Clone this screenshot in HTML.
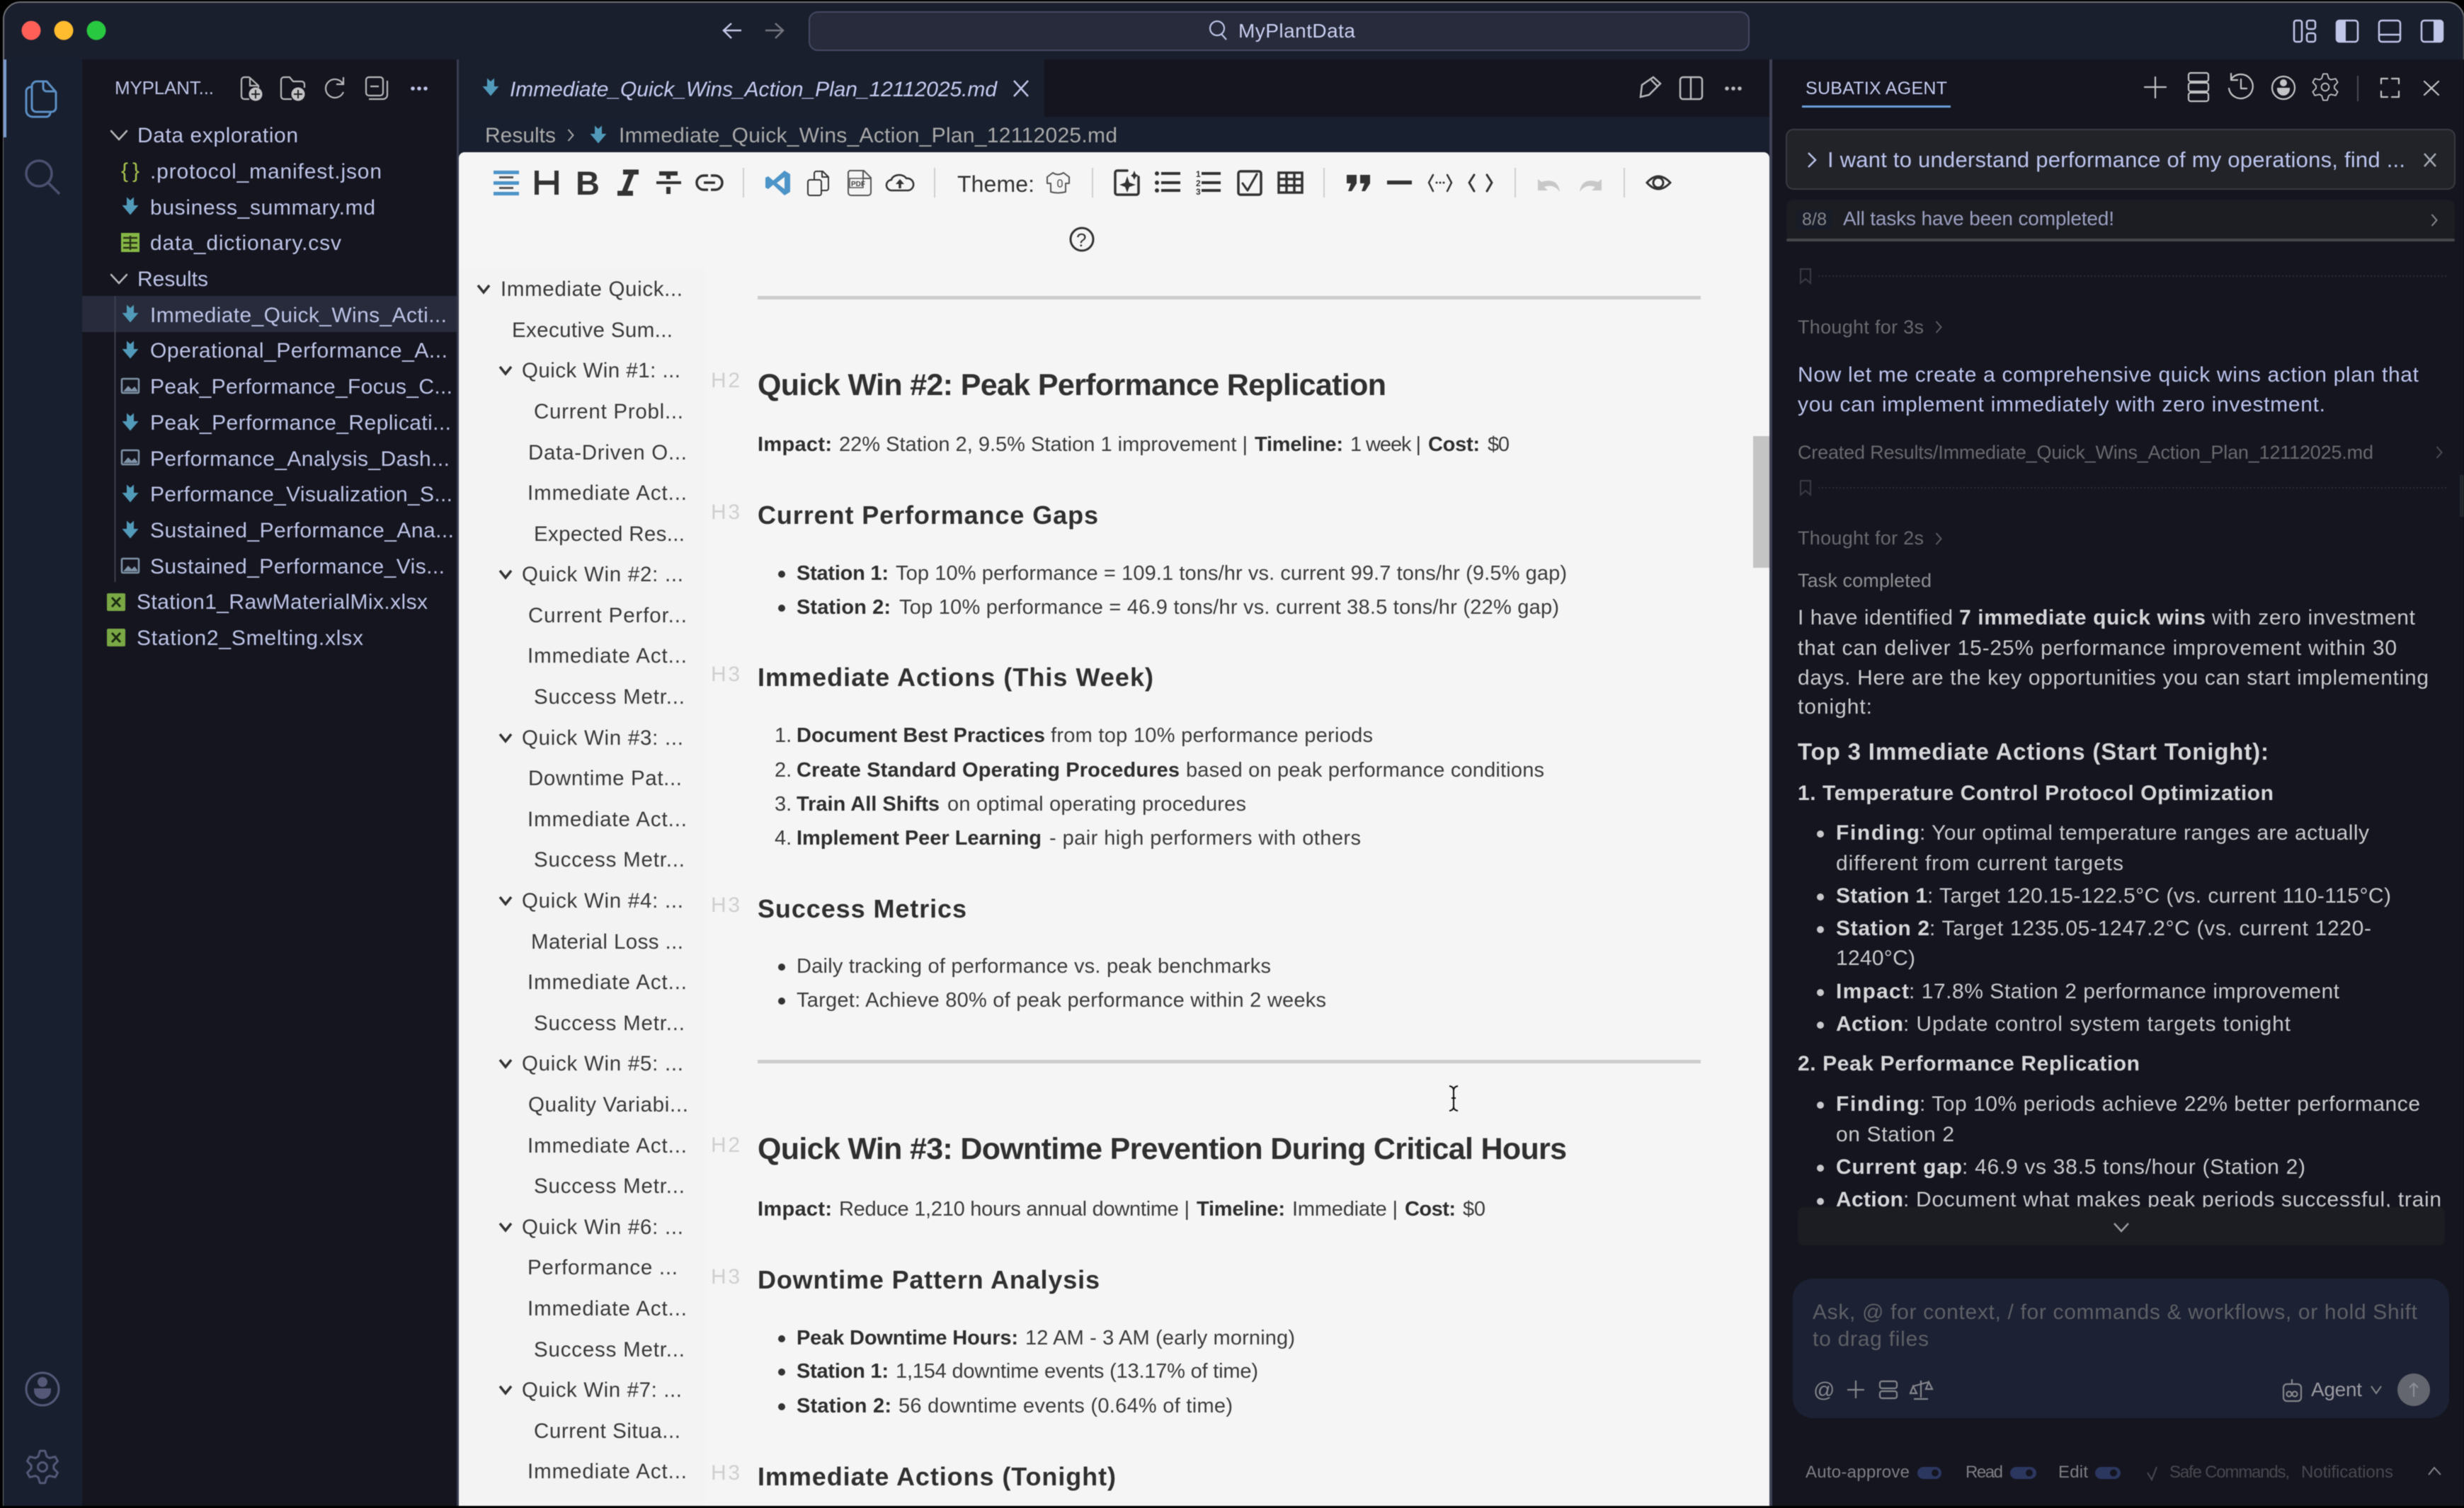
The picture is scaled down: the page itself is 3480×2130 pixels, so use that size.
<!DOCTYPE html>
<html><head><meta charset="utf-8"><title>MyPlantData</title>
<style>
html,body{margin:0;padding:0;background:#000;width:3480px;height:2130px;overflow:hidden}
svg{display:block;filter:blur(.6px)}
text{font-family:"Liberation Sans",sans-serif;white-space:pre}
.sb{font-size:30px;fill:#bcc3e6}
.ol{font-size:29.5px;fill:#3a3a3a}
.b{font-size:29px;fill:#3c3c3c}
.bb{font-size:29px;fill:#2e2e2e;font-weight:700}
.h2{font-size:43px;fill:#303030;font-weight:700}
.h3{font-size:36px;fill:#303030;font-weight:700}
.tag{font-size:30px;fill:#cfcfcf}
.r{font-size:30px;fill:#c9c9cc}
.rb{font-size:30px;fill:#d6d6d9;font-weight:700}
.rl{font-size:30px;fill:#bcc4ee}
.g{font-size:27px;fill:#69696e}
.ti{fill:none;stroke:#c0c6e8;stroke-width:2.5}
.tb{fill:none;stroke:#333;stroke-width:3;stroke-linecap:round;stroke-linejoin:round}
.ic{fill:none;stroke:#c4c4c6;stroke-width:2.2;stroke-linecap:round;stroke-linejoin:round}
.sep{stroke:#cfcfcf;stroke-width:2}
</style></head><body>
<svg xmlns="http://www.w3.org/2000/svg" width="3480" height="2130" viewBox="0 0 3480 2130">
<defs>
<path id="md" d="M-5,-12.5 L0,-8 L5,-12.5 V-1 H11.5 L0,12.5 L-11.5,-1 H-5 Z" fill="#519aba"/>
<g id="img"><rect x="-12" y="-10" width="24" height="20" rx="1.5" fill="none" stroke="#7f93a8" stroke-width="2.5"/><path d="M-10,8 L-3,0 L2,5 L6,1 L10,6 V8 Z" fill="#7f93a8"/></g>
<g id="xls"><rect x="-13" y="-12" width="26" height="25" rx="2" fill="#79a845"/><path d="M-6,-6 L6,7 M6,-6 L-6,7" stroke="#1b2a12" stroke-width="3" fill="none"/></g>
<path id="gear" d="M-3.6,-22.7 L3.6,-22.7 L6,-14.8 L9.9,-12.6 L17.9,-14.5 L21.5,-8.2 L15.8,-2.2 L15.8,2.2 L21.5,8.2 L17.9,14.5 L9.9,12.6 L6,14.8 L3.6,22.7 L-3.6,22.7 L-6,14.8 L-9.9,12.6 L-17.9,14.5 L-21.5,8.2 L-15.8,2.2 L-15.8,-2.2 L-21.5,-8.2 L-17.9,-14.5 L-9.9,-12.6 L-6,-14.8 Z M6.5,0 A6.5,6.5 0 1 1 -6.5,0 A6.5,6.5 0 1 1 6.5,0 Z" fill="none" stroke-linejoin="round"/>
<path id="chev" d="M-11,-6 L0,6 L11,-6" fill="none" stroke-linecap="round"/>
<path id="ochev" d="M-8,-5 L0,5 L8,-5" fill="none" stroke="#333" stroke-width="3.5"/>
<path id="rch" d="M-3.5,-8 L3.5,0 L-3.5,8" fill="none"/>
<path id="bm" d="M-7,-10 H7 V10 L0,4 L-7,10 Z" fill="none" stroke="#3a3b45" stroke-width="2"/>
<g id="srv"><rect x="-14" y="-20" width="28" height="12" rx="3"/><rect x="-14" y="-6" width="28" height="12" rx="3"/><rect x="-14" y="8" width="28" height="12" rx="3"/></g>
</defs>

<!-- window -->
<rect width="3480" height="2130" fill="#000"/>
<path d="M29,3 H3456 A24,24 0 0 1 3480,27 V2127 H5 V27 A24,24 0 0 1 29,3 Z" fill="#1a1f2e" stroke="#6f7076" stroke-width="2"/>
<!-- traffic -->
<circle cx="44" cy="43" r="13.5" fill="#ff5f57"/><circle cx="90" cy="43" r="13.5" fill="#febc2e"/><circle cx="136" cy="43" r="13.5" fill="#28c840"/>
<!-- nav -->
<g fill="none" stroke-width="2.5"><path d="M1047,43 H1022 M1033,33 L1022,43 L1033,54" stroke="#c4cae8"/><path d="M1081,43 H1106 M1095,33 L1106,43 L1095,54" stroke="#74767f"/></g>
<rect x="1143" y="17" width="1327" height="54" rx="12" fill="#282b3b" stroke="#454963" stroke-width="2"/>
<circle cx="1719" cy="40" r="10" fill="none" stroke="#bcc3e6" stroke-width="2.2"/><path d="M1725,48 L1732,56" stroke="#bcc3e6" stroke-width="2.2"/>
<text x="1749" y="53" font-size="28" fill="#c8cef0" textLength="165">MyPlantData</text>
<!-- layout icons -->
<g class="ti"><rect x="3240" y="29" width="11" height="30" rx="3"/><rect x="3258" y="29" width="12" height="12" rx="3"/><rect x="3258" y="47" width="12" height="12" rx="3"/><rect x="3300" y="29" width="30" height="30" rx="4"/><rect x="3360" y="29" width="30" height="30" rx="4"/><path d="M3360,49 H3390"/><rect x="3420" y="29" width="30" height="30" rx="4"/></g>
<path d="M3304,28 H3313 V60 H3304 a5,5 0 0 1 -5,-5 V33 a5,5 0 0 1 5,-5 Z" fill="#c0c6e8"/>
<path d="M3437,28 H3446 a5,5 0 0 1 5,5 V55 a5,5 0 0 1 -5,5 H3437 Z" fill="#c0c6e8"/>

<!-- activity bar -->
<rect x="5" y="84" width="111" height="2043" fill="#18202f"/>
<rect x="5" y="84" width="4" height="110" fill="#7b9bd0"/>
<g fill="none" stroke="#5b8ec4" stroke-width="3"><path d="M52,115 H66 L79,130 V152 a6,6 0 0 1 -6,6 H51 a6,6 0 0 1 -6,-6 V122 a7,7 0 0 1 7,-7 Z"/><path d="M61,115 V124 a5,5 0 0 0 5,5 H79"/><path d="M45,123 H43 a6,6 0 0 0 -6,6 V156 a9,9 0 0 0 9,9 H66 a6,6 0 0 0 5,-6"/></g>
<circle cx="55" cy="245" r="18" fill="none" stroke="#4c5070" stroke-width="3.5"/><path d="M68,258 L84,274" stroke="#4c5070" stroke-width="3.5"/>
<circle cx="60" cy="1962" r="23" fill="none" stroke="#555877" stroke-width="3"/><circle cx="60" cy="1952" r="7" fill="#555877"/><path d="M48,1961 H72 V1964 A12,12 0 0 1 48,1964 Z" fill="#555877"/>
<use href="#gear" x="60" y="2072" stroke="#555877" stroke-width="3"/>

<!-- sidebar -->
<rect x="116" y="84" width="529" height="2043" fill="#15151f"/>
<rect x="645" y="84" width="3" height="2043" fill="#3a3d50"/>
<rect x="116" y="418" width="529" height="51" fill="#272b3b"/>
<path d="M162.500,418 V822" stroke="#3c3f4c" stroke-width="2"/>
<text x="162" y="133" font-size="26" fill="#bcc3e6" textLength="140">MYPLANT...</text>
<g fill="none" stroke="#b8b8bc" stroke-width="2.2"><path d="M352,109 H345 a4,4 0 0 0 -4,4 V136 a4,4 0 0 0 4,4 H352 M352,109 L365,121 V124 M353,109 V121 H365"/><path d="M397,113 a4,4 0 0 1 4,-4 H409 L414,115 H426 a4,4 0 0 1 4,4 V124 M397,113 V136 a4,4 0 0 0 4,4 H412"/><path d="M484,118 A13,13 0 1 0 485,130 M485,109 V119 H475"/><rect x="517" y="109" width="24" height="26" rx="4"/><path d="M523,122 H535 M547,114 V134 a6,6 0 0 1 -6,6 H521"/></g>
<circle cx="361" cy="133" r="9.500" fill="#c4c4c6"/><path d="M355,133 H367 M361,127 V139" stroke="#222" stroke-width="2"/>
<circle cx="421" cy="133" r="9.500" fill="#c4c4c6"/><path d="M415,133 H427 M421,127 V139" stroke="#222" stroke-width="2"/>
<g fill="#bcc3e6"><circle cx="583" cy="125" r="2.800"/><circle cx="592" cy="125" r="2.800"/><circle cx="601" cy="125" r="2.800"/></g>
<use href="#chev" x="168" y="191" stroke="#b8b8bc" stroke-width="2.500"/><use href="#chev" x="168" y="394" stroke="#b8b8bc" stroke-width="2.500"/>
<text x="194" y="201" class="sb" textLength="227">Data exploration</text>
<text x="171" y="251" font-size="30" fill="#a6c34d" textLength="26">{ }</text>
<text x="212" y="252" class="sb" textLength="327">.protocol_manifest.json</text>
<use href="#md" x="184" y="291"/>
<text x="212" y="303" class="sb" textLength="318">business_summary.md</text>
<rect x="171" y="329" width="26" height="27" fill="#86b845"/><path d="M174,336 H194 M174,343 H194 M174,350 H194 M184,333 V353" stroke="#2a3318" stroke-width="2.500"/>
<text x="212" y="353" class="sb" textLength="270">data_dictionary.csv</text>
<text x="194" y="404" class="sb" textLength="100">Results</text>
<use href="#md" x="184" y="443"/><text x="212" y="455" class="sb" textLength="419">Immediate_Quick_Wins_Acti...</text>
<use href="#md" x="184" y="494"/><text x="212" y="505" class="sb" textLength="420">Operational_Performance_A...</text>
<use href="#img" x="184" y="545"/><text x="212" y="556" class="sb" textLength="427">Peak_Performance_Focus_C...</text>
<use href="#md" x="184" y="596"/><text x="212" y="607" class="sb" textLength="425">Peak_Performance_Replicati...</text>
<use href="#img" x="184" y="646"/><text x="212" y="658" class="sb" textLength="423">Performance_Analysis_Dash...</text>
<use href="#md" x="184" y="697"/><text x="212" y="708" class="sb" textLength="427">Performance_Visualization_S...</text>
<use href="#md" x="184" y="748"/><text x="212" y="759" class="sb" textLength="429">Sustained_Performance_Ana...</text>
<use href="#img" x="184" y="799"/><text x="212" y="810" class="sb" textLength="416">Sustained_Performance_Vis...</text>
<use href="#xls" x="164" y="850"/><text x="193" y="860" class="sb" textLength="411">Station1_RawMaterialMix.xlsx</text>
<use href="#xls" x="164" y="900"/><text x="193" y="911" class="sb" textLength="320">Station2_Smelting.xlsx</text>

<!-- editor chrome -->
<rect x="648" y="84" width="1855" height="81" fill="#15151f"/>
<rect x="648" y="84" width="827" height="81" fill="#1a1f2e"/>
<rect x="648" y="165" width="1855" height="50" fill="#181f2e"/>
<use href="#md" x="693" y="123"/>
<text x="720" y="136" font-size="30" font-style="italic" fill="#c4cbf0" textLength="688">Immediate_Quick_Wins_Action_Plan_12112025.md</text>
<path d="M1432,114 L1452,136 M1452,114 L1432,136" stroke="#c0c6e8" stroke-width="2.500"/>
<g fill="none" stroke="#b8b8bc" stroke-width="2.500"><path d="M2317,137 L2319,120 L2335,109 L2345,118 L2329,134 Z M2332,113 L2341,122"/><rect x="2373" y="109" width="31" height="31" rx="4"/><path d="M2388,109 V140"/></g>
<g fill="#b8b8bc"><circle cx="2439" cy="125" r="2.800"/><circle cx="2448" cy="125" r="2.800"/><circle cx="2457" cy="125" r="2.800"/></g>
<text x="685" y="201" font-size="30" fill="#a9a9a9" textLength="100">Results</text>
<use href="#rch" x="806" y="191" stroke="#a9a9a9" stroke-width="2"/>
<use href="#md" x="845" y="190"/>
<text x="874" y="201" font-size="30" fill="#a9a9a9" textLength="704">Immediate_Quick_Wins_Action_Plan_12112025.md</text>

<!-- white panel -->
<path d="M656,215 H2491 a8,8 0 0 1 8,8 V2127 H648 V223 a8,8 0 0 1 8,-8 Z" fill="#f5f5f5"/>
<rect x="2499" y="84" width="4" height="2043" fill="#3f4155"/>
<rect x="648" y="380" width="347" height="1747" fill="#f3f3f3"/>

<!-- toolbar -->
<g fill="#4d94c8"><rect x="697" y="241" width="36" height="5"/><rect x="697" y="256" width="36" height="5"/><rect x="697" y="271" width="36" height="5"/></g>
<g fill="#555"><rect x="705" y="249" width="20" height="3"/><rect x="705" y="264" width="20" height="3"/></g>
<path d="M758,241 V275 M786,241 V275 M758,258 H786" stroke="#333" stroke-width="6" fill="none"/>
<text x="813" y="275" font-size="47" font-weight="700" fill="#333">B</text>
<path d="M880,243 H902 M872,273 H894 M893,243 L881,273" stroke="#333" stroke-width="7" fill="none"/>
<path d="M927,258 H962" stroke="#333" stroke-width="4"/><path d="M931,245 H957 M944,245 V253 M944,264 V274" stroke="#333" stroke-width="6" fill="none"/>
<path d="M1000,248 H994 a10,10 0 0 0 0,20 H1000 M1004,248 H1010 a10,10 0 0 1 0,20 H1004 M994,258 H1010" stroke="#333" stroke-width="3.500" fill="none"/>
<g class="sep"><path d="M1050,237 V279 M1320,237 V279 M1543,237 V279 M1870,237 V279 M2140,237 V279 M2294,237 V279"/></g>
<path d="M1108,241 L1116,246 V271 L1108,276 L1092,261 L1085,267 L1081,265 V251 L1085,249 L1092,255 Z" fill="#4d94c8"/><path d="M1108,250 V267 L1097,258.500 Z" fill="#f5f5f5"/>
<g class="tb" style="stroke-width:2"><path d="M1150,254 V245 a3,3 0 0 1 3,-3 H1162 L1170,250 V266 a3,3 0 0 1 -3,3 H1160 M1161,242 V250 H1170"/><rect x="1141" y="254" width="19" height="22" rx="3"/></g>
<g fill="none" stroke="#555" stroke-width="2"><path d="M1200,241 H1220 L1230,251 V272 a4,4 0 0 1 -4,4 H1202 a4,4 0 0 1 -4,-4 V243 Z M1219,241 V252 H1230"/></g><rect x="1200" y="252" width="19" height="13" fill="#f5f5f5" stroke="#555" stroke-width="1.500"/><text x="1202" y="263" font-size="10" font-weight="700" fill="#444">PDF</text>
<path d="M1261,269 H1260 a7.500,7.500 0 0 1 -1,-15 a11,8 0 0 1 21,-2 a8.500,8.500 0 0 1 3,17 Z" class="tb" style="stroke-width:2.500"/><path d="M1271,266 V259" stroke="#333" stroke-width="3.500"/><path d="M1265,260 L1271,253 L1277,260 Z" fill="#333"/>
<text x="1352" y="271" font-size="32" fill="#333" textLength="109">Theme:</text>
<path d="M1487,244 Q1494,249 1502,244 L1510,250 L1510,259 L1505,259 V271 Q1494,274 1484,271 V259 L1479,259 L1479,250 Z" fill="none" stroke="#555" stroke-width="2" stroke-linejoin="round"/><rect x="1494" y="254" width="6" height="10" rx="3" fill="none" stroke="#555" stroke-width="1.500"/>
<g class="tb" style="stroke-width:3.500"><path d="M1592,241 H1578 a3,3 0 0 0 -3,3 V272 a3,3 0 0 0 3,3 H1605 a3,3 0 0 0 3,-3 V250"/></g>
<path d="M1592,249 L1595,258 L1604,261 L1595,264 L1592,272 L1589,264 L1581,261 L1589,258 Z M1602,241 L1604,246 L1608,248 L1604,250 L1602,254 L1600,250 L1597,248 L1600,246 Z" fill="#333"/>
<g fill="#333"><circle cx="1634" cy="245" r="3"/><circle cx="1634" cy="258" r="3"/><circle cx="1634" cy="269" r="3"/><rect x="1640" y="243" width="27" height="4"/><rect x="1640" y="256" width="27" height="4"/><rect x="1640" y="267" width="27" height="4"/><rect x="1697" y="243" width="27" height="4"/><rect x="1697" y="256" width="27" height="4"/><rect x="1697" y="267" width="27" height="4"/></g>
<g font-size="12" font-weight="700" fill="#333"><text x="1689" y="250">1</text><text x="1689" y="263">2</text><text x="1689" y="275">3</text></g>
<rect x="1749" y="242" width="32" height="33" rx="3" class="tb" style="stroke-width:3.500"/><path d="M1755,259 L1762,269 L1775,246" class="tb"/>
<rect x="1806" y="244" width="33" height="28" fill="none" stroke="#333" stroke-width="3.500"/><path d="M1817,244 V272 M1828,244 V272 M1806,253 H1839 M1806,262 H1839" stroke="#333" stroke-width="3.500"/>
<path d="M1902,247 H1916 V259 L1909,270 H1904 L1908,259 H1902 Z M1921,247 H1935 V259 L1928,270 H1923 L1927,259 H1921 Z" fill="#333"/>
<rect x="1959" y="255" width="35" height="5.500" fill="#333"/>
<path d="M2024,247 L2018,258 L2024,270 M2044,247 L2050,258 L2044,270" class="tb" style="stroke-width:2.500"/><g fill="#333"><circle cx="2029" cy="258" r="1.500"/><circle cx="2034" cy="258" r="1.500"/><circle cx="2039" cy="258" r="1.500"/></g>
<path d="M2082,247 L2075,258 L2082,270 M2100,247 L2107,258 L2100,270" class="tb"/>
<path d="M2172,253 V269 H2186 L2181,264 Q2194,259 2203,271 Q2200,250 2177,257 Z" fill="#c8c8c8"/>
<path d="M2262,253 V269 H2248 L2253,264 Q2240,259 2231,271 Q2234,250 2257,257 Z" fill="#c8c8c8"/>
<path d="M2326,258 Q2342,240 2359,258 Q2342,276 2326,258 Z" fill="none" stroke="#333" stroke-width="3"/><circle cx="2342" cy="258" r="7" fill="none" stroke="#333" stroke-width="3"/>
<circle cx="1528" cy="338" r="16" fill="none" stroke="#333" stroke-width="3"/><text x="1520" y="348" font-size="26" fill="#333">?</text>

<!-- outline -->
<use href="#ochev" x="683" y="408"/>
<text x="707" y="418" class="ol" textLength="257">Immediate Quick...</text>
<text x="723" y="476" class="ol" textLength="227">Executive Sum...</text>
<use href="#ochev" x="714" y="523"/><text x="737" y="533" class="ol" textLength="224">Quick Win #1: ...</text>
<text x="754" y="591" class="ol" textLength="211">Current Probl...</text>
<text x="746" y="649" class="ol" textLength="224">Data-Driven O...</text>
<text x="745" y="706" class="ol" textLength="225">Immediate Act...</text>
<text x="754" y="764" class="ol" textLength="213">Expected Res...</text>
<use href="#ochev" x="714" y="811"/><text x="737" y="821" class="ol" textLength="228">Quick Win #2: ...</text>
<text x="746" y="879" class="ol" textLength="224">Current Perfor...</text>
<text x="745" y="936" class="ol" textLength="225">Immediate Act...</text>
<text x="754" y="994" class="ol" textLength="213">Success Metr...</text>
<use href="#ochev" x="714" y="1042"/><text x="737" y="1052" class="ol" textLength="228">Quick Win #3: ...</text>
<text x="746" y="1109" class="ol" textLength="217">Downtime Pat...</text>
<text x="745" y="1167" class="ol" textLength="225">Immediate Act...</text>
<text x="754" y="1224" class="ol" textLength="213">Success Metr...</text>
<use href="#ochev" x="714" y="1272"/><text x="737" y="1282" class="ol" textLength="228">Quick Win #4: ...</text>
<text x="750" y="1340" class="ol" textLength="215">Material Loss ...</text>
<text x="745" y="1397" class="ol" textLength="225">Immediate Act...</text>
<text x="754" y="1455" class="ol" textLength="213">Success Metr...</text>
<use href="#ochev" x="714" y="1502"/><text x="737" y="1512" class="ol" textLength="228">Quick Win #5: ...</text>
<text x="746" y="1570" class="ol" textLength="226">Quality Variabi...</text>
<text x="745" y="1628" class="ol" textLength="225">Immediate Act...</text>
<text x="754" y="1685" class="ol" textLength="213">Success Metr...</text>
<use href="#ochev" x="714" y="1733"/><text x="737" y="1743" class="ol" textLength="228">Quick Win #6: ...</text>
<text x="745" y="1800" class="ol" textLength="212">Performance ...</text>
<text x="745" y="1858" class="ol" textLength="225">Immediate Act...</text>
<text x="754" y="1916" class="ol" textLength="213">Success Metr...</text>
<use href="#ochev" x="714" y="1963"/><text x="737" y="1973" class="ol" textLength="226">Quick Win #7: ...</text>
<text x="754" y="2031" class="ol" textLength="207">Current Situa...</text>
<text x="745" y="2088" class="ol" textLength="225">Immediate Act...</text>

<!-- doc -->
<rect x="1070" y="418" width="1332" height="5" fill="#cdcdcd"/>
<rect x="1070" y="1497" width="1332" height="5" fill="#cdcdcd"/>
<text x="1004" y="547" class="tag" textLength="41">H2</text>
<text x="1070" y="558" class="h2" textLength="888">Quick Win #2: Peak Performance Replication</text>
<text x="1070" y="637" class="bb" textLength="105">Impact:</text><text x="1185" y="637" class="b" textLength="577">22% Station 2, 9.5% Station 1 improvement |</text><text x="1772" y="637" class="bb" textLength="125">Timeline:</text><text x="1907" y="637" class="b" textLength="100">1 week |</text><text x="2017" y="637" class="bb" textLength="73">Cost:</text><text x="2101" y="637" class="b" textLength="31">$0</text>
<text x="1004" y="733" class="tag" textLength="41">H3</text>
<text x="1070" y="740" class="h3" textLength="481">Current Performance Gaps</text>
<circle cx="1104" cy="811" r="5" fill="#333"/><text x="1125" y="819" class="bb" textLength="130">Station 1:</text><text x="1265" y="819" class="b" textLength="948">Top 10% performance = 109.1 tons/hr vs. current 99.7 tons/hr (9.5% gap)</text>
<circle cx="1104" cy="859" r="5" fill="#333"/><text x="1125" y="867" class="bb" textLength="133">Station 2:</text><text x="1270" y="867" class="b" textLength="932">Top 10% performance = 46.9 tons/hr vs. current 38.5 tons/hr (22% gap)</text>
<text x="1004" y="962" class="tag" textLength="41">H3</text>
<text x="1070" y="969" class="h3" textLength="559">Immediate Actions (This Week)</text>
<text x="1094" y="1048" class="b">1.</text><text x="1125" y="1048" class="bb" textLength="351">Document Best Practices</text><text x="1484" y="1048" class="b" textLength="455">from top 10% performance periods</text>
<text x="1094" y="1097" class="b">2.</text><text x="1125" y="1097" class="bb" textLength="541">Create Standard Operating Procedures</text><text x="1675" y="1097" class="b" textLength="506">based on peak performance conditions</text>
<text x="1094" y="1145" class="b">3.</text><text x="1125" y="1145" class="bb" textLength="202">Train All Shifts</text><text x="1338" y="1145" class="b" textLength="422">on optimal operating procedures</text>
<text x="1094" y="1193" class="b">4.</text><text x="1125" y="1193" class="bb" textLength="346">Implement Peer Learning</text><text x="1482" y="1193" class="b" textLength="440">- pair high performers with others</text>
<text x="1004" y="1288" class="tag" textLength="41">H3</text>
<text x="1070" y="1296" class="h3" textLength="295">Success Metrics</text>
<circle cx="1104" cy="1366" r="5" fill="#333"/><text x="1125" y="1374" class="b" textLength="670">Daily tracking of performance vs. peak benchmarks</text>
<circle cx="1104" cy="1414" r="5" fill="#333"/><text x="1125" y="1422" class="b" textLength="748">Target: Achieve 80% of peak performance within 2 weeks</text>
<text x="1004" y="1627" class="tag" textLength="41">H2</text>
<text x="1070" y="1637" class="h2" textLength="1143">Quick Win #3: Downtime Prevention During Critical Hours</text>
<text x="1070" y="1717" class="bb" textLength="105">Impact:</text><text x="1185" y="1717" class="b" textLength="495">Reduce 1,210 hours annual downtime |</text><text x="1690" y="1717" class="bb" textLength="125">Timeline:</text><text x="1825" y="1717" class="b" textLength="149">Immediate |</text><text x="1984" y="1717" class="bb" textLength="72">Cost:</text><text x="2066" y="1717" class="b" textLength="32">$0</text>
<text x="1004" y="1813" class="tag" textLength="41">H3</text>
<text x="1070" y="1820" class="h3" textLength="483">Downtime Pattern Analysis</text>
<circle cx="1104" cy="1891" r="5" fill="#333"/><text x="1125" y="1899" class="bb" textLength="313">Peak Downtime Hours:</text><text x="1448" y="1899" class="b" textLength="381">12 AM - 3 AM (early morning)</text>
<circle cx="1104" cy="1938" r="5" fill="#333"/><text x="1125" y="1946" class="bb" textLength="130">Station 1:</text><text x="1265" y="1946" class="b" textLength="512">1,154 downtime events (13.17% of time)</text>
<circle cx="1104" cy="1987" r="5" fill="#333"/><text x="1125" y="1995" class="bb" textLength="134">Station 2:</text><text x="1269" y="1995" class="b" textLength="472">56 downtime events (0.64% of time)</text>
<text x="1004" y="2090" class="tag" textLength="41">H3</text>
<text x="1070" y="2098" class="h3" textLength="506">Immediate Actions (Tonight)</text>
<!-- scrollbar & cursor -->
<rect x="2476" y="616" width="23" height="186" fill="#c4c4c4"/>
<path d="M2047,1534 Q2053,1535 2053,1540 V1563 Q2053,1568 2047,1569 M2059,1534 Q2053,1535 2053,1540 M2059,1569 Q2053,1568 2053,1563 M2050,1551 H2056" fill="none" stroke="#111" stroke-width="2"/>

<!-- right panel -->
<rect x="2503" y="84" width="977" height="2043" fill="#14151f"/>
<text x="2550" y="133" font-size="25" fill="#c4cbf0" textLength="200">SUBATIX AGENT</text>
<rect x="2545" y="149" width="210" height="3" fill="#6aa0dc"/>
<g class="ic"><path d="M3044,109 V138 M3029,123 H3059"/><use href="#srv" x="3105" y="123"/><path d="M3151,112 A17,17 0 1 1 3148,125 M3151,104 V113 H3160 M3165,112 V125 H3173"/><circle cx="3225" cy="124" r="16"/><use href="#gear" x="3284" y="123" transform="translate(3284,123) scale(.82) translate(-3284,-123)"/><path d="M3363,118 V111 H3372 M3378,111 H3388 V118 M3388,129 V137 H3378 M3372,137 H3363 V129"/><path d="M3424,115 L3444,134 M3444,115 L3424,134"/></g>
<circle cx="3225" cy="117" r="5" fill="#c4c4c6"/><path d="M3216,124 H3234 V126 A9,9 0 0 1 3216,126 Z" fill="#c4c4c6"/>
<path d="M3330,107 V143" stroke="#4a4b52" stroke-width="2"/>
<rect x="2523" y="183" width="944" height="84" rx="10" fill="#212329" stroke="#3a3b42" stroke-width="2"/>
<path d="M2554,216 L2564,226 L2554,236" fill="none" stroke="#bcc2e8" stroke-width="2.500"/>
<text x="2581" y="236" font-size="31" fill="#bcc4ee" textLength="816">I want to understand performance of my operations, find ...</text>
<path d="M3424,217 L3440,235 M3440,217 L3424,235" stroke="#a6a8b4" stroke-width="2.500"/>
<rect x="2523" y="282" width="944" height="59" rx="10" fill="#1c1d22"/><rect x="2523" y="337" width="944" height="4" rx="2" fill="#48484c"/>
<rect x="2537" y="297" width="50" height="28" rx="6" fill="#171c28"/>
<text x="2545" y="318" font-size="25" fill="#86868a" textLength="35">8/8</text>
<text x="2603" y="318" font-size="28" fill="#9a9fc0" textLength="383">All tasks have been completed!</text>
<use href="#rch" x="3438" y="311" stroke="#88888c" stroke-width="2"/>
<use href="#bm" x="2550" y="390"/><path d="M2568,390 H3455" stroke="#2c2d37" stroke-width="2" stroke-dasharray="2 3"/>
<text x="2539" y="471" class="g" textLength="178">Thought for 3s</text><use href="#rch" x="2738" y="462" stroke="#5c5c62" stroke-width="2"/>
<text x="2539" y="539" class="rl" textLength="877">Now let me create a comprehensive quick wins action plan that</text>
<text x="2539" y="581" class="rl" textLength="745">you can implement immediately with zero investment.</text>
<text x="2539" y="648" class="g" textLength="813">Created Results/Immediate_Quick_Wins_Action_Plan_12112025.md</text><use href="#rch" x="3445" y="639" stroke="#4c4c52" stroke-width="2"/>
<use href="#bm" x="2550" y="689"/><path d="M2568,689 H3455" stroke="#2c2d37" stroke-width="2" stroke-dasharray="2 3"/>
<rect x="3474" y="671" width="6" height="59" fill="#24262e"/>
<text x="2539" y="769" class="g" textLength="178">Thought for 2s</text><use href="#rch" x="2738" y="761" stroke="#5c5c62" stroke-width="2"/>
<text x="2539" y="829" font-size="27" fill="#8f8f92" textLength="189">Task completed</text>
<text x="2539" y="882" class="r" textLength="219">I have identified</text><text x="2767" y="882" class="rb" textLength="348">7 immediate quick wins</text><text x="3124" y="882" class="r" textLength="287">with zero investment</text>
<text x="2539" y="925" class="r" textLength="846">that can deliver 15-25% performance improvement within 30</text>
<text x="2539" y="967" class="r" textLength="891">days. Here are the key opportunities you can start implementing</text>
<text x="2539" y="1008" class="r" textLength="105">tonight:</text>
<text x="2539" y="1073" font-size="33" font-weight="700" fill="#d6d6d9" textLength="665">Top 3 Immediate Actions (Start Tonight):</text>
<text x="2539" y="1130" font-size="30" font-weight="700" fill="#d6d6d9" textLength="672">1. Temperature Control Protocol Optimization</text>
<g fill="#c9c9cc"><circle cx="2571" cy="1178" r="5"/><circle cx="2571" cy="1267" r="5"/><circle cx="2571" cy="1313" r="5"/><circle cx="2571" cy="1402" r="5"/><circle cx="2571" cy="1448" r="5"/><circle cx="2571" cy="1561" r="5"/><circle cx="2571" cy="1650" r="5"/><circle cx="2571" cy="1697" r="5"/></g>
<text x="2593" y="1186" class="rb" textLength="118">Finding</text><text x="2711" y="1186" class="r" textLength="635">: Your optimal temperature ranges are actually</text>
<text x="2593" y="1229" class="r" textLength="406">different from current targets</text>
<text x="2593" y="1275" class="rb" textLength="129">Station 1</text><text x="2722" y="1275" class="r" textLength="655">: Target 120.15-122.5°C (vs. current 110-115°C)</text>
<text x="2593" y="1321" class="rb" textLength="132">Station 2</text><text x="2725" y="1321" class="r" textLength="624">: Target 1235.05-1247.2°C (vs. current 1220-</text>
<text x="2593" y="1363" class="r" textLength="112">1240°C)</text>
<text x="2593" y="1410" class="rb" textLength="103">Impact</text><text x="2696" y="1410" class="r" textLength="608">: 17.8% Station 2 performance improvement</text>
<text x="2593" y="1456" class="rb" textLength="95">Action</text><text x="2688" y="1456" class="r" textLength="547">: Update control system targets tonight</text>
<text x="2539" y="1512" font-size="30" font-weight="700" fill="#d6d6d9" textLength="483">2. Peak Performance Replication</text>
<text x="2593" y="1569" class="rb" textLength="118">Finding</text><text x="2711" y="1569" class="r" textLength="707">: Top 10% periods achieve 22% better performance</text>
<text x="2593" y="1612" class="r" textLength="167">on Station 2</text>
<text x="2593" y="1658" class="rb" textLength="178">Current gap</text><text x="2771" y="1658" class="r" textLength="485">: 46.9 vs 38.5 tons/hour (Station 2)</text>
<text x="2593" y="1704" class="rb" textLength="95">Action</text><text x="2688" y="1704" class="r" textLength="760">: Document what makes peak periods successful, train</text>
<rect x="2503" y="1705" width="977" height="101" fill="#14151f"/>
<rect x="2539" y="1705" width="914" height="54" rx="8" fill="#1c1d22"/>
<path d="M2986,1728 L2996,1739 L3006,1728" fill="none" stroke="#9c9ca2" stroke-width="2.500"/>
<!-- input -->
<rect x="2532" y="1806" width="927" height="197" rx="28" fill="#1c2133"/>
<text x="2560" y="1863" font-size="30" fill="#5e6066" textLength="854">Ask, @ for context, / for commands &amp; workflows, or hold Shift</text>
<text x="2560" y="1901" font-size="30" fill="#5e6066" textLength="164">to drag files</text>
<text x="2561" y="1973" font-size="30" fill="#85868c" textLength="28">@</text>
<g fill="none" stroke="#85868c" stroke-width="2.200"><path d="M2621,1950 V1975 M2609,1963 H2633"/><rect x="2655" y="1951" width="24" height="10" rx="3"/><rect x="2655" y="1965" width="24" height="10" rx="3"/><path d="M2713,1950 V1974 M2703,1976 H2723 M2702,1958 L2724,1952 M2702,1958 L2698,1968 H2707 Z M2724,1952 L2720,1962 H2729 Z"/><rect x="3225" y="1955" width="25" height="24" rx="5"/><path d="M3237,1955 V1948"/><circle cx="3233" cy="1969" r="3.500"/><circle cx="3241" cy="1969" r="3.500"/></g>
<text x="3264" y="1972" font-size="28" fill="#9a9aa0" textLength="72">Agent</text>
<path d="M3349,1958 L3356,1968 L3363,1958" fill="none" stroke="#85868c" stroke-width="2"/>
<circle cx="3409" cy="1963" r="23" fill="#64666f"/><path d="M3409,1973 V1954 M3403,1960 L3409,1954 L3415,1960" fill="none" stroke="#8d8f98" stroke-width="2"/>
<!-- bottom -->
<text x="2550" y="2087" font-size="24" fill="#7e7e84" textLength="147">Auto-approve</text>
<rect x="2708" y="2072" width="34" height="17" rx="8.500" fill="#2c3760"/><circle cx="2733" cy="2080.500" r="5" fill="#14151f"/>
<text x="2776" y="2087" font-size="24" fill="#7e7e84" textLength="53">Read</text>
<rect x="2839" y="2072" width="37" height="17" rx="8.500" fill="#2c3760"/><circle cx="2866" cy="2080.500" r="5" fill="#14151f"/>
<text x="2907" y="2087" font-size="24" fill="#7e7e84" textLength="42">Edit</text>
<rect x="2959" y="2072" width="36" height="17" rx="8.500" fill="#2c3760"/><circle cx="2985" cy="2080.500" r="5" fill="#14151f"/>
<path d="M3033,2080 L3039,2090 L3046,2072" fill="none" stroke="#48494f" stroke-width="2"/>
<text x="3064" y="2087" font-size="24" fill="#48494f" textLength="170">Safe Commands,</text>
<text x="3250" y="2087" font-size="24" fill="#48494f" textLength="130">Notifications</text>
<path d="M3430,2083 L3438,2073 L3447,2083" fill="none" stroke="#85868c" stroke-width="2"/>
<rect x="0" y="2127" width="3480" height="3" fill="#000"/>
</svg>
</body></html>
